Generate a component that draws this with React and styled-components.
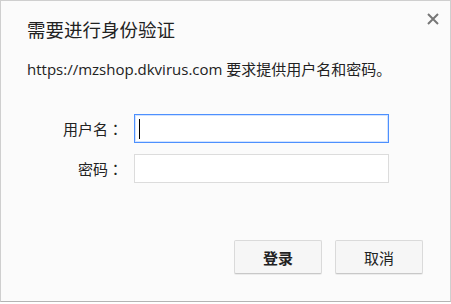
import React from 'react';
import styled, { createGlobalStyle } from 'styled-components';

const GlobalStyle = createGlobalStyle`
  html, body {
    margin: 0;
    padding: 0;
    background: #ffffff;
  }
  body {
    font-family: "Open Sans", "Noto Sans CJK SC", sans-serif;
    color: #222;
  }
`;

const Dialog = styled.div`
  position: relative;
  box-sizing: border-box;
  width: 451px;
  height: 302px;
  padding: 0 27px 0 26px;
  background: #fbfbfb;
  border: 1px solid #cfcfcf;
  border-bottom-color: #b4b4b4;
  box-shadow: 0 1px 1px rgba(0, 0, 0, 0.12);
  display: flex;
  flex-direction: column;
`;

const Close = styled.button`
  position: absolute;
  top: 10px;
  right: 9px;
  width: 16px;
  height: 16px;
  padding: 0;
  border: 0;
  background: none;
  display: flex;
  align-items: center;
  justify-content: center;
  cursor: pointer;
`;

const Title = styled.h1`
  margin: 15px 0 0;
  font-size: 18.5px;
  font-weight: normal;
  line-height: 27px;
  color: #222;
`;

const Message = styled.p`
  margin: 16px 0 0;
  font-size: 15px;
  line-height: 20px;
  color: #222;
  white-space: nowrap;
`;

const Form = styled.div`
  margin-top: 35px;
  display: grid;
  grid-template-columns: 96px 255px;
  column-gap: 11px;
  row-gap: 11px;
  align-items: center;
`;

const Label = styled.label`
  text-align: right;
  font-size: 15px;
  line-height: 20px;
  color: #222;
`;

// full-width colon sits centred in its box, as in the original dialog
const Colon = styled.span`
  font-family: "Noto Sans CJK JP", sans-serif;
`;

const Field = styled.div`
  position: relative;
  height: 29px;
`;

const Input = styled.input`
  box-sizing: border-box;
  width: 100%;
  height: 29px;
  margin: 0;
  padding: 0 5px;
  background: #fff;
  border: 1px solid ${p => (p.$active ? '#4d90fe' : '#dcdcdc')};
  box-shadow: ${p => (p.$active ? 'inset 0 0 0 1px rgba(77,144,254,0.25)' : 'none')};
  outline: none;
  font-size: 15px;
  font-family: inherit;
`;

const Caret = styled.span`
  position: absolute;
  left: 5px;
  top: 5px;
  width: 1px;
  height: 20px;
  background: #000;
`;

const Actions = styled.div`
  margin-top: 57px;
  display: flex;
  justify-content: flex-end;
  gap: 13px;
`;

const Button = styled.button`
  box-sizing: border-box;
  width: 88px;
  height: 34px;
  padding: 0;
  background: #f6f6f6;
  border: 1px solid #dadada;
  border-bottom-color: #c8c8c8;
  border-radius: 2px;
  box-shadow: 0 1px 0 rgba(0, 0, 0, 0.06);
  font-family: inherit;
  font-size: 15px;
  font-weight: ${p => (p.$primary ? 'bold' : 'normal')};
  color: #222;
  cursor: pointer;
`;

const CloseIcon = () => (
  <svg width="12" height="12" viewBox="0 0 12 12">
    <path d="M1 1 L11 11 M11 1 L1 11" stroke="#777" strokeWidth="2" fill="none" />
  </svg>
);

export default function App() {
  return (
    <>
      <GlobalStyle />
      <Dialog>
        <Close aria-label="关闭">
          <CloseIcon />
        </Close>
        <Title>需要进行身份验证</Title>
        <Message>https://mzshop.dkvirus.com 要求提供用户名和密码。</Message>
        <Form>
          <Label htmlFor="user">
            用户名<Colon>：</Colon>
          </Label>
          <Field>
            <Input id="user" type="text" $active />
            <Caret />
          </Field>
          <Label htmlFor="pass">
            密码<Colon>：</Colon>
          </Label>
          <Field>
            <Input id="pass" type="password" />
          </Field>
        </Form>
        <Actions>
          <Button $primary>登录</Button>
          <Button>取消</Button>
        </Actions>
      </Dialog>
    </>
  );
}
